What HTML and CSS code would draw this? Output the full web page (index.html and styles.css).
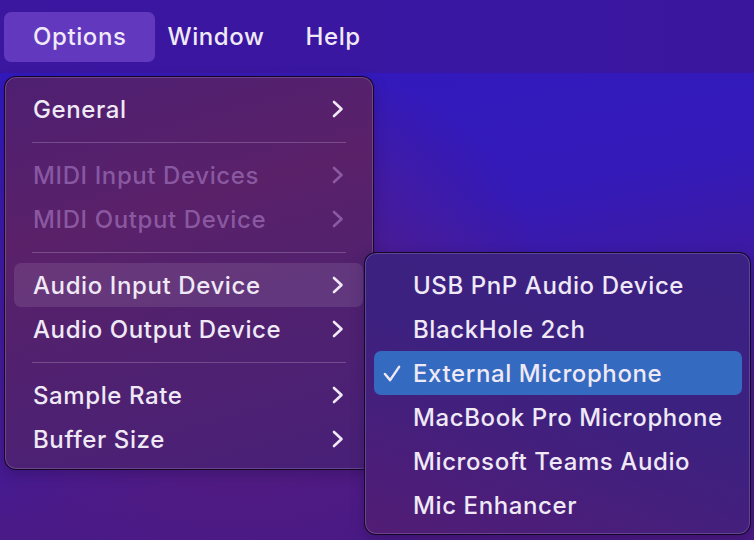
FILE: index.html
```html
<!DOCTYPE html>
<html>
<head>
<meta charset="utf-8">
<link rel="stylesheet" href="styles.css">
</head>
<body>
<div class="screen">
  <nav class="menubar">
    <span class="bar-item active">Options</span>
    <span class="bar-item">Window</span>
    <span class="bar-item">Help</span>
  </nav>
  <main class="desktop">
    <div class="menu main-menu">
      <div class="row"><span>General</span><svg class="chev" viewBox="0 0 12 18"><path d="M2 2 L9.5 9 L2 16"/></svg></div>
      <div class="sep"></div>
      <div class="row disabled"><span>MIDI Input Devices</span><svg class="chev" viewBox="0 0 12 18"><path d="M2 2 L9.5 9 L2 16"/></svg></div>
      <div class="row disabled"><span>MIDI Output Device</span><svg class="chev" viewBox="0 0 12 18"><path d="M2 2 L9.5 9 L2 16"/></svg></div>
      <div class="sep"></div>
      <div class="row hover"><span>Audio Input Device</span><svg class="chev" viewBox="0 0 12 18"><path d="M2 2 L9.5 9 L2 16"/></svg></div>
      <div class="row"><span>Audio Output Device</span><svg class="chev" viewBox="0 0 12 18"><path d="M2 2 L9.5 9 L2 16"/></svg></div>
      <div class="sep"></div>
      <div class="row"><span>Sample Rate</span><svg class="chev" viewBox="0 0 12 18"><path d="M2 2 L9.5 9 L2 16"/></svg></div>
      <div class="row"><span>Buffer Size</span><svg class="chev" viewBox="0 0 12 18"><path d="M2 2 L9.5 9 L2 16"/></svg></div>
    </div>
    <div class="menu sub-menu">
      <div class="row"><span class="check"></span><span>USB PnP Audio Device</span></div>
      <div class="row"><span class="check"></span><span>BlackHole 2ch</span></div>
      <div class="row selected"><span class="check"><svg viewBox="0 0 20 18"><path d="M2 9.5 L7.5 16 L17 2"/></svg></span><span>External Microphone</span></div>
      <div class="row"><span class="check"></span><span>MacBook Pro Microphone</span></div>
      <div class="row"><span class="check"></span><span>Microsoft Teams Audio</span></div>
      <div class="row"><span class="check"></span><span>Mic Enhancer</span></div>
    </div>
  </main>
</div>
</body>
</html>
```
FILE: styles.css
```css
* { box-sizing: border-box; }
html, body {
  margin: 0;
  padding: 0;
  width: 754px;
  height: 540px;
  overflow: hidden;
}
body {
  font-family: Inter, "Noto Sans", "Liberation Sans", sans-serif;
  color: #efe9f6;
  background: #3a169f;
}
.screen {
  width: 754px;
  height: 540px;
  display: flex;
  flex-direction: column;
}
.menubar {
  height: 73px;
  flex: none;
  display: flex;
  align-items: center;
  gap: 41px;
  padding-left: 33px;
  background: linear-gradient(90deg, #3b169f, #3a17a2 60%, #3a169d);
  font-size: 24px;
  font-weight: 450;
  letter-spacing: 0.6px;
}
.bar-item {
  position: relative;
  line-height: 30px;
  z-index: 0;
}
.bar-item.active::before {
  content: "";
  position: absolute;
  left: -29px;
  right: -28px;
  top: -10px;
  bottom: -10px;
  background: #6238bf;
  border-radius: 7px;
  z-index: -1;
}
.desktop {
  position: relative;
  flex: 1;
  background:
    radial-gradient(ellipse 320px 260px at 230px 230px, #5c1d77 0%, rgba(92,29,119,0) 100%),
    linear-gradient(170deg, #3219bf 0%, #341ab8 35%, #4a1a88 75%, #4b1982 100%);
}
.menu {
  position: absolute;
  border: 1px solid rgba(10, 2, 25, 0.85);
  border-radius: 12px;
  box-shadow: inset 0 0 0 1px rgba(255, 255, 255, 0.17), 0 4px 14px rgba(20, 0, 50, 0.25);
  font-size: 24px;
  font-weight: 450;
  letter-spacing: 0.6px;
  display: flex;
  flex-direction: column;
}
.main-menu {
  left: 4px;
  top: 3px;
  width: 370px;
  height: 394px;
  padding: 10px 10px 8px 9px;
  background: linear-gradient(165deg, #4e1f72 0%, #5a2169 35%, #51216f 60%, #482078 100%);
}
.sub-menu {
  left: 364px;
  top: 179px;
  width: 387px;
  height: 283px;
  padding: 10px 8px 7px 9px;
  background: linear-gradient(200deg, #3b2184 0%, #3c2180 45%, #4a1e7a 80%, #521d74 100%);
}
.row {
  height: 44px;
  flex: none;
  display: flex;
  align-items: center;
  justify-content: space-between;
  padding: 0 19px 0 19px;
  border-radius: 7px;
  white-space: nowrap;
}
.row.disabled { color: rgba(200, 160, 230, 0.45); }
.row.hover { background: rgba(255, 255, 255, 0.1); }
.chev {
  width: 12px;
  height: 18px;
  fill: none;
  stroke: currentColor;
  stroke-width: 2.6;
  stroke-linecap: round;
  stroke-linejoin: round;
}
.sep {
  height: 1px;
  margin: 10.5px 17px 10.5px 18px;
  background: rgba(255, 255, 255, 0.2);
  flex: none;
}
.sub-menu .row {
  justify-content: flex-start;
  padding-left: 9px;
}
.check {
  width: 30px;
  display: flex;
  align-items: center;
}
.check svg {
  width: 19px;
  height: 17px;
  fill: none;
  stroke: currentColor;
  stroke-width: 2.6;
  stroke-linecap: round;
  stroke-linejoin: round;
}
.row.selected { background: #346ac0; }
```
